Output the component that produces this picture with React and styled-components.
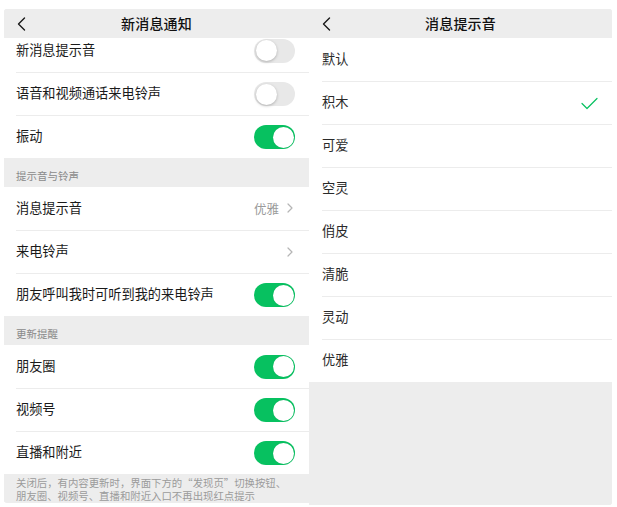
import React from "react";
import styled, { createGlobalStyle } from "styled-components";

const Global = createGlobalStyle`
  html, body { margin: 0; padding: 0; background: #ffffff; }
  body { font-family: "Noto Sans CJK SC", "Noto Sans", sans-serif; color: #1a1a1a; }
`;

const Page = styled.div`
  display: flex;
  align-items: flex-start;
  padding: 9px 0 0 4px;
  width: 617px;
  height: 507px;
  box-sizing: border-box;
`;

const Panel = styled.div`
  width: ${(p) => p.$w}px;
  height: ${(p) => p.$h}px;
  display: flex;
  flex-direction: column;
  background: #ededed;
  border-radius: ${(p) => p.$radius};
  overflow: hidden;
`;

const Header = styled.div`
  height: 29px;
  flex: none;
  display: grid;
  grid-template-columns: 40px 1fr 40px;
  align-items: center;
  background: #ededed;
`;

const Back = styled.div`
  display: flex;
  align-items: center;
  padding-left: ${(p) => p.$pad}px;
  height: 100%;
`;

const Title = styled.div`
  text-align: center;
  font-size: 14px;
  font-weight: 500;
  color: #111;
  letter-spacing: 0.2px;
  padding-bottom: 1px;
`;

const Scroll = styled.div`
  flex: 1;
  overflow: hidden;
  display: flex;
  flex-direction: column;
`;

const Group = styled.div`
  background: #fff;
  margin-top: ${(p) => p.$offset || 0}px;
`;

const Row = styled.div`
  padding-left: ${(p) => p.$pad}px;
  background: #fff;
`;

const RowBody = styled.div`
  height: ${(p) => (p.$first ? 43 : 42)}px;
  border-top: ${(p) => (p.$first ? "none" : "1px solid #ececec")};
  display: flex;
  align-items: center;
  justify-content: space-between;
  padding-right: ${(p) => p.$padR}px;
`;

const Label = styled.span`
  font-size: 13.2px;
  line-height: 16px;
  padding-bottom: 2px;
  color: ${(p) => p.$color || "#1a1a1a"};
`;

const Value = styled.div`
  display: flex;
  align-items: center;
  gap: 8px;
  font-size: 12.5px;
  color: #9a9a9a;
  padding-right: 2px;
  padding-bottom: 1px;
`;

const SectionTitle = styled.div`
  height: 29px;
  box-sizing: border-box;
  padding: 11px 0 0 12px;
  font-size: 10.5px;
  color: #8a8a8a;
  background: #ededed;
  line-height: 13px;
`;

const Footer = styled.div`
  padding: 2px 10px 0 12px;
  background: #ededed;
  display: flex;
  flex-direction: column;
`;

const FootLine = styled.div`
  font-size: 10.4px;
  line-height: 13px;
  height: 13px;
  color: #9b9b9b;
  white-space: nowrap;
`;

const Track = styled.div`
  width: 41px;
  height: 24px;
  border-radius: 12px;
  box-sizing: border-box;
  background: ${(p) => (p.$on ? "#07c160" : "#e8e8e8")};
  display: flex;
  align-items: center;
  justify-content: ${(p) => (p.$on ? "flex-end" : "flex-start")};
  padding: 0 1.5px;
`;

const Knob = styled.div`
  width: 21px;
  height: 21px;
  border-radius: 50%;
  background: #fff;
  box-shadow: ${(p) => (p.$on ? "0 0 1px rgba(0,0,0,0.15)" : "0 1px 3px rgba(0,0,0,0.25)")};
`;

const Toggle = ({ on }) => (
  <Track $on={on}>
    <Knob $on={on} />
  </Track>
);

const Chevron = () => (
  <svg width="6" height="10" viewBox="0 0 6 10">
    <polyline points="1,1 5,5 1,9" fill="none" stroke="#b5b5b5" strokeWidth="1.2" strokeLinecap="round" strokeLinejoin="round" />
  </svg>
);

const BackIcon = () => (
  <svg width="9" height="14" viewBox="0 0 9 14">
    <polyline points="7.5,1 1.5,7 7.5,13" fill="none" stroke="#1a1a1a" strokeWidth="1.4" strokeLinecap="round" strokeLinejoin="round" />
  </svg>
);

const Check = () => (
  <svg width="17" height="13" viewBox="0 0 17 13">
    <polyline points="1,6.5 6,11.5 16,1.5" fill="none" stroke="#07c160" strokeWidth="1.2" strokeLinecap="round" strokeLinejoin="round" />
  </svg>
);

const Fill = styled.div`
  flex: 1;
  background: #ededed;
`;

const LeftRow = ({ first, label, children }) => (
  <Row $pad={12}>
    <RowBody $first={first} $padR={14}>
      <Label>{label}</Label>
      {children}
    </RowBody>
  </Row>
);

const sounds = ["默认", "积木", "可爱", "空灵", "俏皮", "清脆", "灵动", "优雅"];

export default function App() {
  return (
    <>
      <Global />
      <Page>
        <Panel $w={305} $h={494} $radius="3px 0 0 3px">
          <Header>
            <Back $pad={13}>
              <BackIcon />
            </Back>
            <Title>新消息通知</Title>
            <span />
          </Header>
          <Scroll>
            <Group $offset={-9}>
              <LeftRow first label="新消息提示音">
                <Toggle on={false} />
              </LeftRow>
              <LeftRow label="语音和视频通话来电铃声">
                <Toggle on={false} />
              </LeftRow>
              <LeftRow label="振动">
                <Toggle on />
              </LeftRow>
            </Group>
            <SectionTitle>提示音与铃声</SectionTitle>
            <Group>
              <LeftRow first label="消息提示音">
                <Value>
                  优雅
                  <Chevron />
                </Value>
              </LeftRow>
              <LeftRow label="来电铃声">
                <Value>
                  <Chevron />
                </Value>
              </LeftRow>
              <LeftRow label="朋友呼叫我时可听到我的来电铃声">
                <Toggle on />
              </LeftRow>
            </Group>
            <SectionTitle>更新提醒</SectionTitle>
            <Group>
              <LeftRow first label="朋友圈">
                <Toggle on />
              </LeftRow>
              <LeftRow label="视频号">
                <Toggle on />
              </LeftRow>
              <LeftRow label="直播和附近">
                <Toggle on />
              </LeftRow>
            </Group>
            <Footer>
              <FootLine>关闭后，有内容更新时，界面下方的“发现页”切换按钮、</FootLine>
              <FootLine>朋友圈、视频号、直播和附近入口不再出现红点提示</FootLine>
            </Footer>
          </Scroll>
        </Panel>
        <Panel $w={303} $h={496} $radius="0 3px 3px 0">
          <Header>
            <Back $pad={13}>
              <BackIcon />
            </Back>
            <Title>消息提示音</Title>
            <span />
          </Header>
          <Group>
            {sounds.map((s, i) => (
              <Row key={s} $pad={13}>
                <RowBody $first={i === 0} $padR={14}>
                  <Label $color="#2a2a2a">{s}</Label>
                  {s === "积木" && <Check />}
                </RowBody>
              </Row>
            ))}
          </Group>
          <Fill />
        </Panel>
      </Page>
    </>
  );
}
